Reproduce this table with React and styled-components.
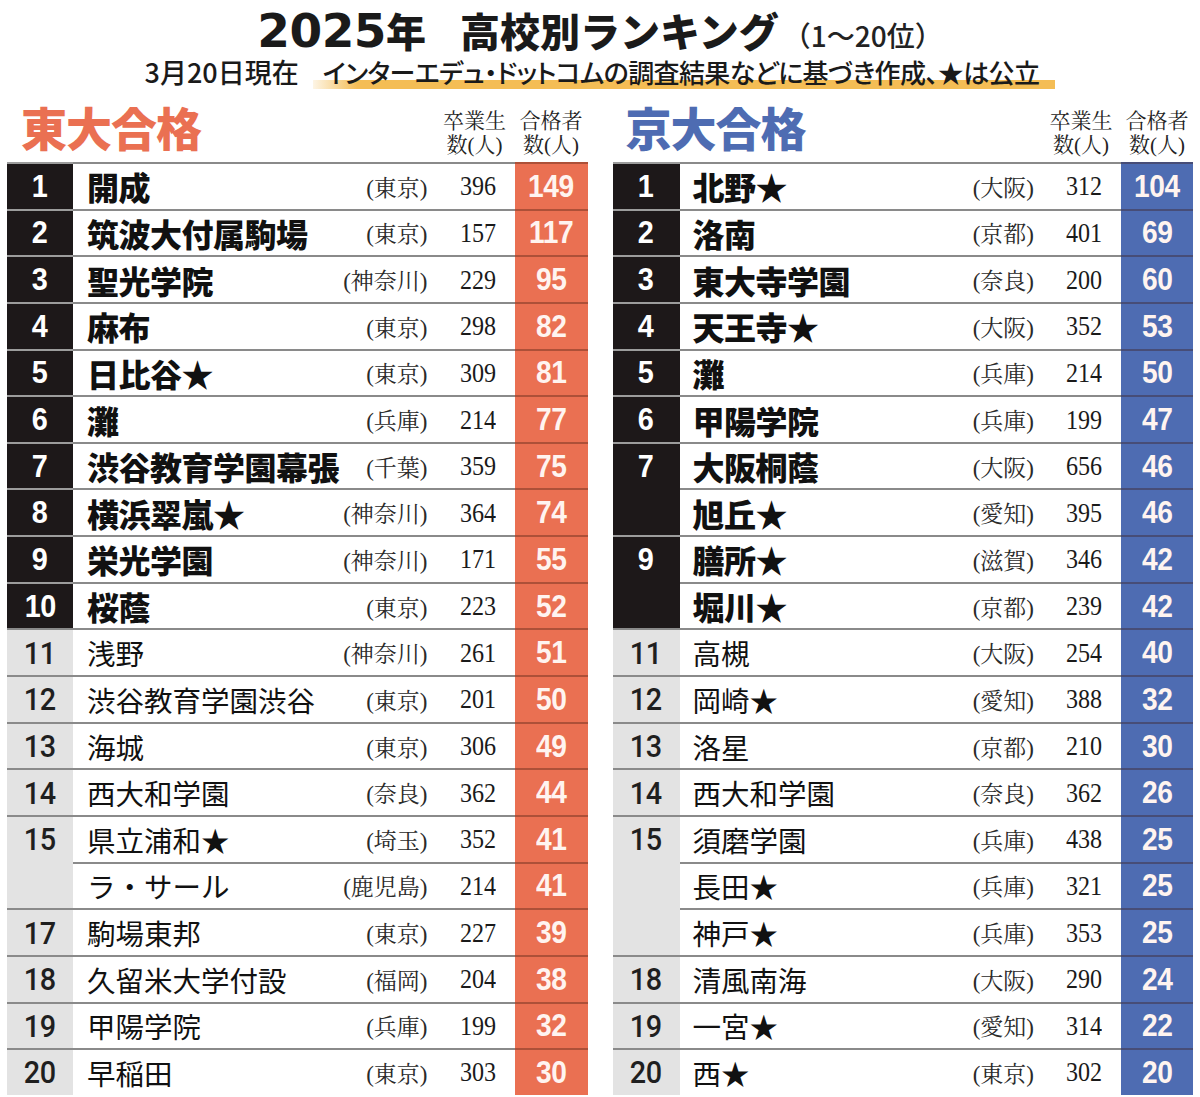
import React from 'react';
import styled, { createGlobalStyle } from 'styled-components';

const todai = [
  { rank: 1, rows: [['開成', '東京', 396, 149]] },
  { rank: 2, rows: [['筑波大付属駒場', '東京', 157, 117]] },
  { rank: 3, rows: [['聖光学院', '神奈川', 229, 95]] },
  { rank: 4, rows: [['麻布', '東京', 298, 82]] },
  { rank: 5, rows: [['日比谷★', '東京', 309, 81]] },
  { rank: 6, rows: [['灘', '兵庫', 214, 77]] },
  { rank: 7, rows: [['渋谷教育学園幕張', '千葉', 359, 75]] },
  { rank: 8, rows: [['横浜翠嵐★', '神奈川', 364, 74]] },
  { rank: 9, rows: [['栄光学園', '神奈川', 171, 55]] },
  { rank: 10, rows: [['桜蔭', '東京', 223, 52]] },
  { rank: 11, rows: [['浅野', '神奈川', 261, 51]] },
  { rank: 12, rows: [['渋谷教育学園渋谷', '東京', 201, 50]] },
  { rank: 13, rows: [['海城', '東京', 306, 49]] },
  { rank: 14, rows: [['西大和学園', '奈良', 362, 44]] },
  { rank: 15, rows: [['県立浦和★', '埼玉', 352, 41], ['ラ・サール', '鹿児島', 214, 41]] },
  { rank: 17, rows: [['駒場東邦', '東京', 227, 39]] },
  { rank: 18, rows: [['久留米大学付設', '福岡', 204, 38]] },
  { rank: 19, rows: [['甲陽学院', '兵庫', 199, 32]] },
  { rank: 20, rows: [['早稲田', '東京', 303, 30]] },
];

const kyodai = [
  { rank: 1, rows: [['北野★', '大阪', 312, 104]] },
  { rank: 2, rows: [['洛南', '京都', 401, 69]] },
  { rank: 3, rows: [['東大寺学園', '奈良', 200, 60]] },
  { rank: 4, rows: [['天王寺★', '大阪', 352, 53]] },
  { rank: 5, rows: [['灘', '兵庫', 214, 50]] },
  { rank: 6, rows: [['甲陽学院', '兵庫', 199, 47]] },
  { rank: 7, rows: [['大阪桐蔭', '大阪', 656, 46], ['旭丘★', '愛知', 395, 46]] },
  { rank: 9, rows: [['膳所★', '滋賀', 346, 42], ['堀川★', '京都', 239, 42]] },
  { rank: 11, rows: [['高槻', '大阪', 254, 40]] },
  { rank: 12, rows: [['岡崎★', '愛知', 388, 32]] },
  { rank: 13, rows: [['洛星', '京都', 210, 30]] },
  { rank: 14, rows: [['西大和学園', '奈良', 362, 26]] },
  { rank: 15, rows: [['須磨学園', '兵庫', 438, 25], ['長田★', '兵庫', 321, 25], ['神戸★', '兵庫', 353, 25]] },
  { rank: 18, rows: [['清風南海', '大阪', 290, 24]] },
  { rank: 19, rows: [['一宮★', '愛知', 314, 22]] },
  { rank: 20, rows: [['西★', '東京', 302, 20]] },
];

const GlobalStyle = createGlobalStyle`
  html, body { margin: 0; padding: 0; background: #fff; }
  body {
    font-family: "Noto Sans CJK JP", sans-serif;
    color: #151515;
    overflow: hidden;
  }
`;

const Page = styled.div`
  width: 1200px;
  padding-top: 7px;
`;

const Title = styled.h1`
  margin: 0;
  height: 46px;
  display: flex;
  justify-content: center;
  align-items: baseline;
  line-height: 46px;
  color: #1a1a1a;
`;

const Year = styled.span`
  font-family: "DejaVu Sans", "Noto Sans CJK JP", sans-serif;
  font-size: 47px;
  font-weight: 700;
  letter-spacing: -0.5px;
  margin-right: 34px;

  small {
    font-family: "Noto Sans CJK JP", sans-serif;
    font-size: 40px;
    font-weight: 900;
    letter-spacing: 0;
  }
`;

const Main = styled.span`
  font-size: 40px;
  font-weight: 900;
`;

const Range = styled.span`
  font-size: 28px;
  font-weight: 500;
  margin-left: 4px;
  color: #222;
`;

const Sub = styled.div`
  display: flex;
  justify-content: center;
  align-items: baseline;
  height: 34px;
  margin-top: 2px;
  line-height: 34px;
  font-weight: 500;
  color: #1a1a1a;
`;

const Date = styled.span`
  font-size: 27px;
  margin-right: 14px;
  font-feature-settings: "palt";
`;

const Note = styled.span`
  font-size: 26px;
  letter-spacing: -0.6px;
  font-feature-settings: "palt";
  padding: 0 16px 0 10px;
  background: linear-gradient(to right, rgba(244, 189, 85, 0.15), #f4bd55 6%, #f4bd55)
    no-repeat left bottom / 100% 9px;
`;

const Columns = styled.div`
  display: grid;
  grid-template-columns: 1fr 1fr;
  gap: 25px;
  padding: 9px 7px 0;
`;

const Panel = styled.section`
  display: flex;
  flex-direction: column;
`;

const PanelHead = styled.div`
  display: flex;
  height: 64px;
`;

const PanelTitle = styled.h2`
  flex: 1;
  margin: 0;
  padding-left: ${(p) => p.$indent}px;
  align-self: center;
  margin-bottom: 8px;
  font-size: 46px;
  line-height: 52px;
  font-weight: 900;
  letter-spacing: -1px;
  color: ${(p) => p.$color};
`;

const Label = styled.div`
  width: ${(p) => p.$w}px;
  align-self: flex-end;
  padding-bottom: 5px;
  text-align: center;
  font-family: "Liberation Serif", "Noto Serif CJK JP", "Noto Sans CJK JP", serif;
  font-size: 21px;
  line-height: 24px;
  color: #222;
  white-space: nowrap;
`;

const Group = styled.div`
  display: flex;
`;

const RankCell = styled.div`
  width: ${(p) => p.$w}px;
  flex: none;
  background: ${(p) => (p.$top ? '#1d1819' : '#e3e3e3')};
  border-top: 2px solid ${(p) => (p.$top ? '#9c9c9c' : '#8a8a8a')};
  box-sizing: border-box;
`;

const RankNum = styled.div`
  height: 44.65px;
  display: flex;
  align-items: center;
  justify-content: center;
  font-family: ${(p) => (p.$top ? '"Liberation Sans", Arial' : 'Roboto, "Liberation Sans"')}, sans-serif;
  font-size: 32px;
  font-weight: ${(p) => (p.$top ? 700 : 500)};
  color: ${(p) => (p.$top ? '#fff' : '#1f1f1f')};

  span {
    display: inline-block;
    transform: scaleX(0.9);
    letter-spacing: -0.5px;
  }
`;

const Rows = styled.div`
  flex: 1;
  display: flex;
  flex-direction: column;
`;

const Row = styled.div`
  display: flex;
  height: 46.65px;
`;

const Info = styled.div`
  flex: 1;
  display: flex;
  align-items: center;
  border-top: 2px solid #8a8a8a;
  box-sizing: border-box;
  background: #fff;
`;

const Name = styled.div`
  flex: 1;
  padding-left: ${(p) => p.$indent}px;
  font-size: ${(p) => (p.$top ? 32 : 28.5)}px;
  font-weight: ${(p) => (p.$top ? 900 : 400)};
  letter-spacing: ${(p) => (p.$top ? '-0.5px' : '0')};
  color: #111;
  white-space: nowrap;
`;

const Pref = styled.div`
  margin-right: 7px;
  font-family: "Liberation Serif", "Noto Serif CJK JP", "Noto Sans CJK JP", serif;
  font-size: 23px;
  color: #2a2a2a;
  white-space: nowrap;
`;

const Grad = styled.div`
  width: 80px;
  padding-right: 19px;
  box-sizing: border-box;
  text-align: right;
  font-family: "Liberation Serif", "Times New Roman", serif;
  font-size: 28px;
  color: #1a1a1a;

  span {
    display: inline-block;
    transform: scaleX(0.86);
    transform-origin: right center;
  }
`;

const Count = styled.div`
  width: ${(p) => p.$w}px;
  flex: none;
  display: flex;
  align-items: center;
  justify-content: center;
  background: ${(p) => p.$color};
  border-top: 2px solid rgba(60, 20, 10, 0.35);
  box-sizing: border-box;
  font-family: "Liberation Sans", Arial, sans-serif;
  font-size: 32px;
  font-weight: 700;
  color: #fff4f0;

  span {
    display: inline-block;
    transform: scaleX(0.88);
    letter-spacing: -0.5px;
  }
`;

const Ranking = ({ title, color, data, rankW, countW, indent }) => (
  <Panel>
    <PanelHead>
      <PanelTitle $color={color} $indent={indent}>{title}</PanelTitle>
      <Label $w={80}>卒業生<br />数(人)</Label>
      <Label $w={countW}>合格者<br />数(人)</Label>
    </PanelHead>
    {data.map((g) => {
      const top = g.rank <= 10;
      return (
        <Group key={g.rank}>
          <RankCell $w={rankW} $top={top}>
            <RankNum $top={top}><span>{g.rank}</span></RankNum>
          </RankCell>
          <Rows>
            {g.rows.map(([name, pref, grad, count]) => (
              <Row key={name}>
                <Info>
                  <Name $top={top} $indent={indent}>{name}</Name>
                  <Pref>({pref})</Pref>
                  <Grad><span>{grad}</span></Grad>
                </Info>
                <Count $w={countW} $color={color}><span>{count}</span></Count>
              </Row>
            ))}
          </Rows>
        </Group>
      );
    })}
  </Panel>
);

const App = () => (
  <Page>
    <GlobalStyle />
    <Title>
      <Year>2025<small>年</small></Year>
      <Main>高校別ランキング</Main>
      <Range>（1〜20位）</Range>
    </Title>
    <Sub>
      <Date>3月20日現在</Date>
      <Note>インターエデュ・ドットコムの調査結果などに基づき作成、★は公立</Note>
    </Sub>
    <Columns>
      <Ranking title="東大合格" color="#ea7052" data={todai} rankW={66} countW={73} indent={14} />
      <Ranking title="京大合格" color="#4e6cb2" data={kyodai} rankW={67} countW={72} indent={13} />
    </Columns>
  </Page>
);

export default App;
